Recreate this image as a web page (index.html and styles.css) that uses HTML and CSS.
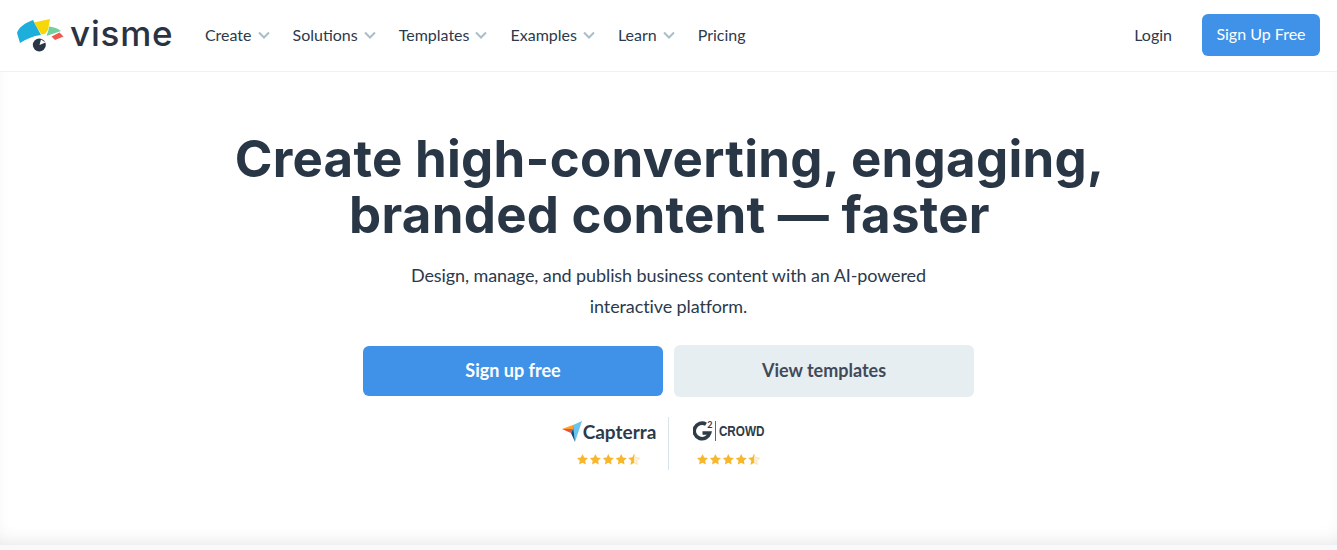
FILE: index.html
```html
<!DOCTYPE html>
<html lang="en">
<head>
    <meta charset="UTF-8">
    <meta name="viewport" content="width=device-width, initial-scale=1.0">
    <title>Visme</title>
    <link rel="stylesheet" href="styles.css">
</head>
<body>

    <svg class="defs" width="0" height="0">
        <defs>
            <path id="star" d="M5.5 0 L7.2 3.6 L11 4.1 L8.2 6.8 L8.9 10.6 L5.5 8.8 L2.1 10.6 L2.8 6.8 L0 4.1 L3.8 3.6 Z"/>
            <path id="half" d="M5.5 0 L5.5 8.8 L2.1 10.6 L2.8 6.8 L0 4.1 L3.8 3.6 Z"/>
        </defs>
    </svg>

    <header class="topbar">
        <a class="logo" href="#">
            <svg class="logo-mark" width="48" height="34" viewBox="16 18 48 34">
                <path d="M17 33 C19 27 25 23 33 20 L41 35 C33 36 26 39 20 43 Z" fill="#1eaedb"/>
                <path d="M34 22.5 L50 19 L48 30 L45 34 L41.5 34.5 Z" fill="#f7d708"/>
                <path d="M49 26.5 C53 27 57 28 61 31 L46.5 36 L48.5 30 Z" fill="#71d09c"/>
                <path d="M51.5 36.5 L59.5 32.5 L63.5 36.5 L55 40 Z" fill="#f2584f"/>
                <circle cx="39.3" cy="45" r="6.5" fill="#2a3646"/>
                <path d="M39.5 45 L41 39.5 L45.5 42.5 Z" fill="#fff"/>
            </svg>
            <span class="logo-text">visme</span>
        </a>
        <nav class="nav">
            <a href="#">Create <svg class="chev" viewBox="0 0 12 8"><path d="M1 1.5 L6 6.5 L11 1.5"/></svg></a>
            <a href="#">Solutions <svg class="chev" viewBox="0 0 12 8"><path d="M1 1.5 L6 6.5 L11 1.5"/></svg></a>
            <a href="#">Templates <svg class="chev" viewBox="0 0 12 8"><path d="M1 1.5 L6 6.5 L11 1.5"/></svg></a>
            <a href="#">Examples <svg class="chev" viewBox="0 0 12 8"><path d="M1 1.5 L6 6.5 L11 1.5"/></svg></a>
            <a href="#">Learn <svg class="chev" viewBox="0 0 12 8"><path d="M1 1.5 L6 6.5 L11 1.5"/></svg></a>
            <a href="#">Pricing</a>
        </nav>
        <a class="login" href="#">Login</a>
        <a class="signup" href="#">Sign Up Free</a>
    </header>

    <main class="hero">
        <h1>Create high-converting, engaging,<br>branded content — faster</h1>
        <p class="sub">Design, manage, and publish business content with an AI-powered<br>interactive platform.</p>

        <div class="cta-row">
            <a class="cta cta-blue" href="#">Sign up free</a>
            <a class="cta cta-grey" href="#">View templates</a>
        </div>

        <div class="ratings">
            <div class="rating">
                <div class="brand">
                    <svg class="capterra-mark" width="20" height="22" viewBox="562 420 20 22">
                        <path d="M562 429 L573 425 L573 429 Z" fill="#ff9d28"/>
                        <path d="M562 429 L573 429 L571 433 Z" fill="#e8503f"/>
                        <path d="M573 425 L582 421 L575 442 Z" fill="#68c5ed"/>
                        <path d="M573 425 L573 429 L571 433 L575 442 Z" fill="#0b4f82"/>
                    </svg>
                    <span class="capterra">Capterra</span>
                </div>
                <svg class="stars" width="63" height="11" viewBox="0 0 63 11">
                    <use href="#star"/>
                    <use href="#star" x="12.9"/>
                    <use href="#star" x="25.8"/>
                    <use href="#star" x="38.7"/>
                    <use href="#star" x="51.6" class="star-empty"/>
                    <use href="#half" x="51.6"/>
                </svg>
            </div>
            <div class="rating-line"></div>
            <div class="rating rating-g2">
                <div class="brand brand-g2">
                    <svg width="20" height="22" viewBox="0 0 20 22">
                        <path d="M13 4.2 A7.8 7.8 0 1 0 16.6 13 L9.5 13" fill="none" stroke="#2f3b47" stroke-width="3.6"/>
                    </svg>
                    <span class="g2-two">2</span>
                    <span class="crowd">CROWD</span>
                </div>
                <svg class="stars" width="63" height="11" viewBox="0 0 63 11">
                    <use href="#star"/>
                    <use href="#star" x="12.9"/>
                    <use href="#star" x="25.8"/>
                    <use href="#star" x="38.7"/>
                    <use href="#star" x="51.6" class="star-empty"/>
                    <use href="#half" x="51.6"/>
                </svg>
            </div>
        </div>
    </main>

    <div class="next-section"></div>

</body>
</html>
```

FILE: styles.css
```css
:root {
    --text-color: #2c3a4b;
    --blue: #3f92e8;
    --grey-btn: #e7eef2;
    --star: #f8b62a;
}
* {
    box-sizing: border-box;
}
html, body {
    height: 100%;
}
body {
    margin: 0;
    font-family: Lato, "Liberation Sans", sans-serif;
    color: var(--text-color);
    background-color: #fff;
    display: flex;
    flex-direction: column;
    overflow: hidden;
}
a {
    color: inherit;
    text-decoration: none;
}
.defs {
    display: block;
    height: 0;
}
.topbar {
    height: 72px;
    flex: none;
    display: flex;
    align-items: center;
    padding: 0 17px 1px 16px;
    border-bottom: 1px solid #f0f1f3;
}
.logo {
    display: flex;
    align-items: center;
    gap: 6px;
    margin-right: 31.5px;
}
.logo-mark {
    display: block;
}
.logo-text {
    font-family: Inter, sans-serif;
    font-size: 35px;
    font-weight: 500;
    letter-spacing: 0.8px;
    line-height: 1;
    color: #2a3343;
    margin-top: -3px;
}
.nav {
    display: flex;
    gap: 23px;
    font-size: 16px;
    flex: 1;
    padding-bottom: 2px;
}
.nav a {
    display: flex;
    align-items: center;
    gap: 6px;
}
.chev {
    width: 12px;
    height: 8px;
    margin-top: 2px;
    fill: none;
    stroke: #a9bdca;
    stroke-width: 2;
}
.login {
    font-size: 16px;
    margin-right: 30px;
    padding-bottom: 2px;
}
.signup {
    width: 118px;
    height: 42px;
    line-height: 40px;
    text-align: center;
    font-size: 16px;
    color: #fff;
    background-color: var(--blue);
    border-radius: 6px;
}
.hero {
    flex: 1;
    display: flex;
    flex-direction: column;
    align-items: center;
    padding-top: 59px;
    box-shadow: inset 0 -10px 20px -10px rgba(0, 0, 0, 0.12);
}
h1 {
    margin: 0;
    padding-left: 2px;
    font-family: Inter, sans-serif;
    font-size: 51px;
    font-weight: 700;
    letter-spacing: 0.27px;
    line-height: 56px;
    text-align: center;
    color: #283645;
}
.sub {
    margin: 17px 0 0;
    font-size: 18px;
    letter-spacing: -0.1px;
    line-height: 31px;
    text-align: center;
}
.cta-row {
    display: flex;
    align-items: center;
    gap: 11px;
    margin-top: 23px;
}
.cta {
    width: 300px;
    text-align: center;
    font-size: 18px;
    font-weight: 700;
    border-radius: 6px;
}
.cta-blue {
    height: 50px;
    line-height: 48px;
    color: #fff;
    background-color: var(--blue);
}
.cta-grey {
    height: 52px;
    line-height: 50px;
    color: #414a59;
    background-color: var(--grey-btn);
}
.ratings {
    display: flex;
    margin-top: 20px;
    height: 53px;
}
.rating {
    width: 120px;
    display: flex;
    flex-direction: column;
    align-items: center;
}
.rating-g2 {
    padding-right: 2px;
}
.rating-line {
    width: 1px;
    background-color: #d9e3ea;
}
.brand {
    display: flex;
    align-items: center;
    height: 28px;
}
.brand-g2 {
    padding-left: 4px;
}
.capterra-mark {
    margin-left: 2px;
}
.capterra {
    font-size: 19px;
    font-weight: 700;
    color: #2c3a4b;
    margin-left: 1px;
}
.g2-two {
    font-size: 9px;
    font-weight: 700;
    line-height: 9px;
    align-self: flex-start;
    margin: 3px 3px 0 -6px;
}
.crowd {
    font-family: "Liberation Sans", sans-serif;
    font-size: 15px;
    font-weight: 700;
    line-height: 20px;
    color: #2f3b47;
    border-left: 1px solid #2f3b47;
    padding-left: 4px;
    transform: scaleX(0.78);
    transform-origin: left;
    margin-right: -12px;
}
.stars {
    display: block;
    margin-top: 9px;
    fill: var(--star);
}
.star-empty {
    fill: #fdf1d6;
    stroke: #f8d98e;
    stroke-width: 0.6;
}
.next-section {
    height: 5px;
    flex: none;
    background-color: #f8f9fb;
}
```
